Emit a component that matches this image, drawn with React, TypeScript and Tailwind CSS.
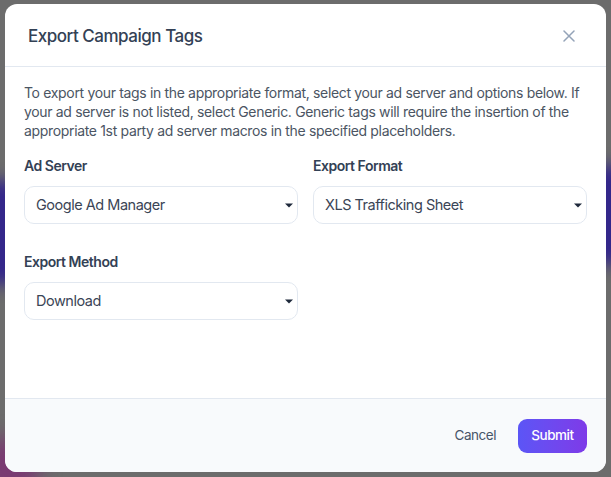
import React from 'react';

const Caret = () => (
  <svg width="8" height="5" viewBox="0 0 8 5" className="shrink-0">
    <path d="M0 0.5h8L4 4.5z" fill="#1e293b" />
  </svg>
);

const Select = ({ value }: { value: string }) => (
  <div className="flex h-[38px] items-center justify-between rounded-[10px] border border-[#e2e8f0] bg-white pl-[11px] pr-[4px]">
    <span className="text-[14.5px] text-[#3b4556]">{value}</span>
    <Caret />
  </div>
);

const Field = ({ label, value }: { label: string; value: string }) => (
  <div className="flex flex-col gap-[10px]">
    <label className="text-[14px] font-semibold leading-[20px] text-[#334155]">{label}</label>
    <Select value={value} />
  </div>
);

export default function App() {
  return (
    <div
      className="relative h-[477px] w-[611px] overflow-hidden bg-[#6c6c6c] pl-[5px] pr-[5px] pt-[4px] tracking-[-0.03em]"
      style={{ fontFamily: 'Inter, "Noto Sans", sans-serif' }}
    >
      {/* blurred backdrop blobs */}
      <div className="absolute left-[-30px] top-[180px] h-[105px] w-[60px] rounded-full bg-[#34278a] blur-[8px]" />
      <div className="absolute right-[-30px] top-[165px] h-[100px] w-[60px] rounded-full bg-[#33278a] blur-[8px]" />
      <div className="absolute bottom-[-20px] left-[-20px] h-[60px] w-[60px] rounded-full bg-[#7a3a72] blur-[10px]" />

      <div className="relative flex h-[468px] w-[601px] flex-col overflow-hidden rounded-[12px] bg-white">
        <div className="flex h-[63px] shrink-0 items-center justify-between border-b border-[#e2e8f0] pl-[23px] pr-[31px]">
          <h2 className="mt-[3px] text-[17px] font-medium text-[#334155]">Export Campaign Tags</h2>
          <svg width="12" height="12" viewBox="0 0 12 12" className="mt-[1px] text-[#94a3b8]">
            <path d="M1 1l10 10M11 1L1 11" stroke="currentColor" strokeWidth="1.5" strokeLinecap="round" />
          </svg>
        </div>

        <div className="flex flex-1 flex-col px-[19px] pt-[16px]">
          <p className="text-[14px] leading-[19px] tracking-[-0.024em] text-[#4b5563]">
            To export your tags in the appropriate format, select your ad server and options below. If your ad server is not listed, select Generic. Generic tags will require the insertion of the appropriate 1st party ad server macros in the specified placeholders.
          </p>
          <div className="mt-[16px] grid grid-cols-2 gap-x-[15px] gap-y-[28px]">
            <Field label="Ad Server" value="Google Ad Manager" />
            <Field label="Export Format" value="XLS Trafficking Sheet" />
            <Field label="Export Method" value="Download" />
          </div>
        </div>

        <div className="flex h-[74px] shrink-0 items-center justify-end gap-[12px] border-t border-[#e2e8f0] bg-[#f8fafc] pr-[19px]">
          <button className="px-[10px] text-[13.5px] text-[#475569]">Cancel</button>
          <button className="h-[34px] w-[69px] rounded-[9px] bg-gradient-to-r from-[#5b55f6] to-[#7e3ae8] text-[13.5px] font-medium text-white">
            Submit
          </button>
        </div>
      </div>
    </div>
  );
}
